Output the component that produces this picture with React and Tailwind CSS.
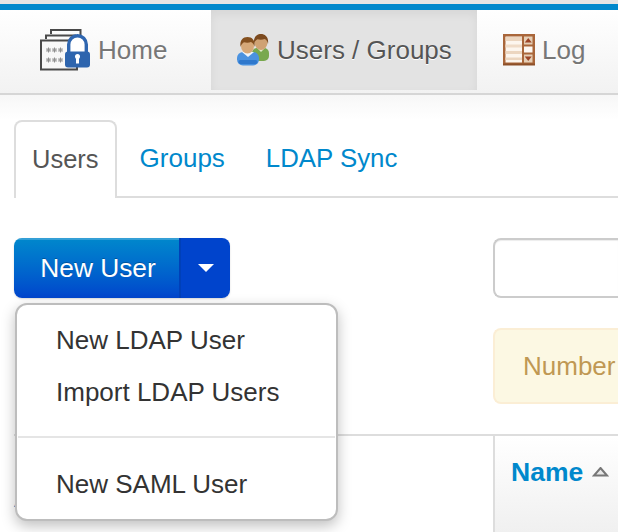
import React from "react";

function HomeIcon() {
  return (
    <svg width="50" height="42" viewBox="0 0 50 42" className="shrink-0">
      <path d="M11 5V1H40.500V8" fill="none" stroke="#4a4a4a" strokeWidth="2" />
      <path d="M6 10V6.500H36" fill="none" stroke="#4a4a4a" strokeWidth="2" />
      <rect x="1" y="11.500" width="36" height="29" fill="#f8f8f8" stroke="#4a4a4a" strokeWidth="2" />
      <g stroke="#8f8f8f" strokeWidth="1">
        <path d="M6 21h5M8.500 18.500v5M6.700 19.200l3.600 3.600M10.300 19.200l-3.600 3.600M12 21h5M14.500 18.500v5M12.700 19.200l3.600 3.600M16.300 19.200l-3.600 3.600M18 21h5M20.500 18.500v5M18.700 19.200l3.600 3.600M22.300 19.200l-3.600 3.600" />
        <path d="M6 31h5M8.500 28.500v5M6.700 29.200l3.600 3.600M10.300 29.200l-3.600 3.600M12 31h5M14.500 28.500v5M12.700 29.200l3.600 3.600M16.300 29.200l-3.600 3.600M18 31h5M20.500 28.500v5M18.700 29.200l3.600 3.600M22.300 29.200l-3.600 3.600" />
      </g>
      <path d="M28.700 25V15.500a8.800 8.800 0 0 1 17.600 0V25" fill="#ffffff" stroke="#2f66b0" strokeWidth="3.400" />
      <rect x="25" y="22.500" width="25" height="16" rx="3" fill="#2e65ae" />
      <circle cx="37.500" cy="27.500" r="2.500" fill="#fff" />
      <rect x="36" y="27.500" width="3" height="7" fill="#fff" />
    </svg>
  );
}

function UsersIcon() {
  return (
    <svg width="33" height="32" viewBox="0 0 33 32" className="shrink-0">
      <rect x="15" y="14" width="17" height="13" rx="5" fill="#78a84e" />
      <path d="M20 14h8l-4 4z" fill="#dfe8c8" />
      <ellipse cx="24" cy="8.500" rx="6.500" ry="7.500" fill="#cfa274" />
      <path d="M17 10C16 3 20 0 24 0s8 3 7 10c-.5-3-2-4.500-3.500-5-2 .8-5 .8-7 .2C19 6 17.500 7.500 17 10z" fill="#7c4a1f" />
      <rect x="0" y="18" width="22" height="13.500" rx="6" fill="#4a92e0" />
      <rect x="1.500" y="26" width="19" height="4" rx="2" fill="#2f78cc" />
      <path d="M5 18h12l-6 5z" fill="#eef4fa" />
      <ellipse cx="10.500" cy="12" rx="6.500" ry="7.500" fill="#d6a878" />
      <path d="M3.500 13C2.500 6 6 3 10.500 3s8 3 7 10c-.5-2.500-2-4.500-3.500-5-2 .8-5 .8-7 .2C5.500 9 4 11 3.500 13z" fill="#84501f" />
    </svg>
  );
}

function LogIcon() {
  return (
    <svg width="32" height="32" viewBox="0 0 32 32" className="shrink-0">
      <rect x="0" y="0" width="32" height="31" fill="#a9663a" />
      <rect x="0" y="29.500" width="32" height="2" fill="#8d5029" />
      <rect x="2.500" y="2.500" width="16.500" height="26" fill="#fdf6ee" />
      <rect x="2.500" y="3" width="16.500" height="4" fill="#ecd6c0" />
      <rect x="2.500" y="10.500" width="16.500" height="3" fill="#f0dcc8" />
      <rect x="2.500" y="17" width="16.500" height="3" fill="#ecd6c0" />
      <rect x="2.500" y="23.500" width="16.500" height="2.500" fill="#ecd6c0" />
      <rect x="21" y="2.500" width="8.500" height="8" fill="#e6cfb6" />
      <rect x="21" y="12.500" width="8.500" height="6" fill="#fdf8f2" />
      <rect x="21" y="20.500" width="8.500" height="8" fill="#e6cfb6" />
      <path d="M25.250 4l3.500 4.500h-7z" fill="#9c4526" />
      <path d="M21.750 22.500h7l-3.500 4.500z" fill="#9c4526" />
    </svg>
  );
}

export default function App() {
  return (
    <div className="w-[618px] h-[532px] overflow-hidden bg-white font-['Liberation_Sans',Arial,sans-serif] text-[26px] leading-[36px]">
      <div className="h-[4px] bg-[#e4e4e4]" />
      <div className="h-[6px] bg-[#0088cc]" />
      <nav className="flex h-[85px] items-start border-b-2 border-[#d6d6d6] bg-gradient-to-b from-white to-[#f2f2f2] [text-shadow:0_1px_0_#fff]">
        <a className="flex h-[80px] w-[211px] shrink-0 items-center gap-[8px] pl-[40px] text-[#777777]">
          <HomeIcon />
          <span>Home</span>
        </a>
        <a className="flex h-[80px] w-[266px] shrink-0 items-center gap-[7px] bg-[#e3e3e3] pl-[26px] text-[#555555] shadow-[inset_0_4px_10px_rgba(0,0,0,0.06)]">
          <UsersIcon />
          <span>Users / Groups</span>
        </a>
        <a className="flex h-[80px] shrink-0 items-center gap-[7px] pl-[26px] text-[#777777]">
          <LogIcon />
          <span>Log</span>
        </a>
      </nav>
      <div className="h-[25px] bg-gradient-to-b from-[#f7f7f7] to-white" />

      <div className="pl-[14px]">
        <ul className="flex h-[78px] gap-[4px] border-b-2 border-[#dddddd]">
          <li className="h-[78px] rounded-t-lg border-2 border-b-0 border-[#dddddd] bg-white px-[16px] pt-[19px] text-[25.5px] text-[#555555]">Users</li>
          <li className="pl-[19px] pr-[19px] pt-[20px] text-[#0088cc]">Groups</li>
          <li className="px-[18px] pt-[20px] text-[25.8px] text-[#0088cc]">LDAP Sync</li>
        </ul>

        <div className="mt-[40px] grid grid-cols-[479px_1fr]">
          <div className="relative">
            <div className="flex h-[60px] w-[216px] overflow-hidden rounded-lg text-white shadow-[0_1px_2px_rgba(0,0,0,0.15)]">
              <button className="flex w-[165px] items-center justify-center bg-gradient-to-b from-[#0088cc] to-[#0044cc] pl-[3px] text-[26.3px] shadow-[inset_0_2px_0_rgba(255,255,255,0.2)] [text-shadow:0_-1px_0_rgba(0,0,0,0.25)]">
                New User
              </button>
              <button className="flex flex-1 items-center justify-center border-l-2 border-[#0040b8] bg-[#0044cc]" aria-label="More">
                <span className="h-0 w-0 border-x-[8px] border-t-[8px] border-x-transparent border-t-white" />
              </button>
            </div>
            <div className="absolute left-px top-[65px] z-10 w-[323px] rounded-xl border-2 border-[#bdbdbd] bg-white pb-[9px] pt-[9px] text-[#333333] shadow-[0_5px_14px_rgba(0,0,0,0.25)]">
              <div className="flex h-[52px] items-center pl-[39px]">New LDAP User</div>
              <div className="flex h-[52px] items-center pl-[39px]">Import LDAP Users</div>
              <div className="mx-px mb-[20px] mt-[18px] h-[2px] bg-[#e5e5e5]" />
              <div className="flex h-[52px] items-center pl-[39px]">New SAML User</div>
            </div>
          </div>
          <div className="h-[60px] rounded-l-lg border-2 border-r-0 border-[#cccccc] bg-white shadow-[inset_0_1px_1px_rgba(0,0,0,0.075)]" />
        </div>

        <div className="mt-[30px] grid grid-cols-[479px_1fr]">
          <div />
          <div className="flex h-[76px] items-center whitespace-nowrap rounded-l-lg border-2 border-r-0 border-[#fbeed5] bg-[#fcf8e3] pl-[28px] text-[#c09853]">
            Number
          </div>
        </div>

        <div className="mt-[30px] grid h-[98px] grid-cols-[479px_1fr] border-t-2 border-[#dddddd]">
          <div className="pt-[44px] text-[#0088cc]">A</div>
          <div className="flex items-start gap-[9px] border-l-2 border-[#dddddd] bg-gradient-to-b from-white to-[#f0f0f0] pl-[16px] pt-[18px]">
            <span className="text-[26.5px] font-bold text-[#0088cc]">Name</span>
            <svg width="17" height="10" viewBox="0 0 17 10" className="mt-[13px]">
              <path d="M8.500 1L15 8.500H2z" fill="#e8e8e8" stroke="#777777" strokeWidth="2" />
            </svg>
          </div>
        </div>
      </div>
    </div>
  );
}
